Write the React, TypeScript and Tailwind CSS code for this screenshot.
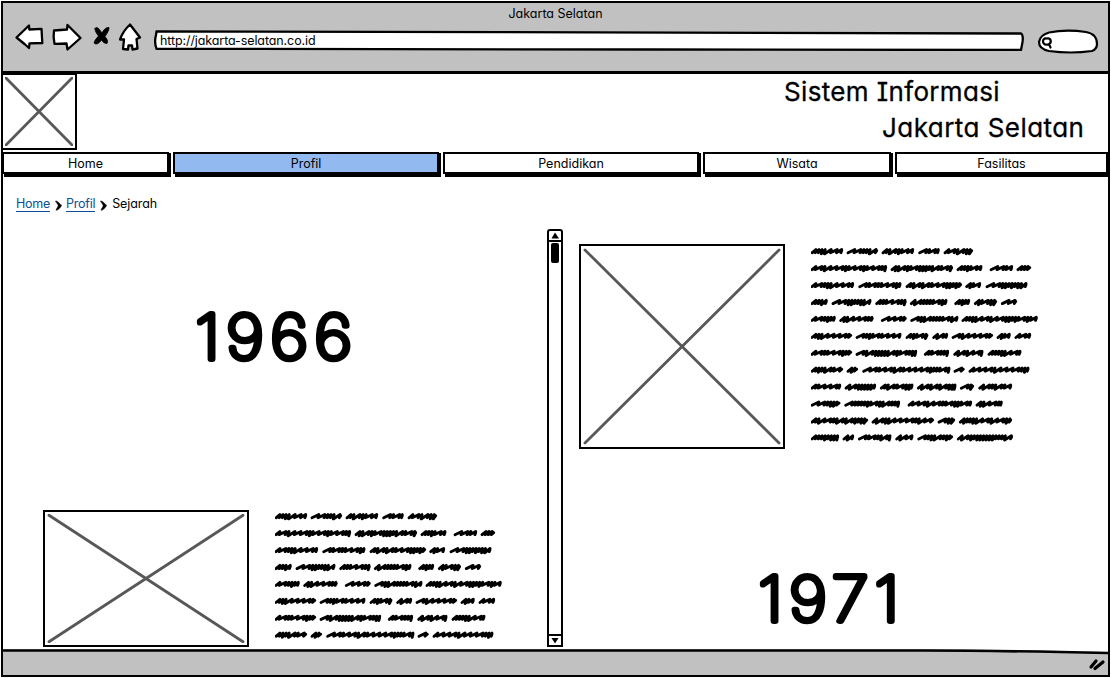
import React from "react";

const FONT = "font-[Inter,'Open_Sans',sans-serif] [font-feature-settings:'cv11','cv08']";

/* Start and end of every scribbled word, in thirds of a pixel. */
const LINES: [number, number][][] = [
  [[0, 95], [108, 200], [213, 308], [323, 385], [399, 485]],
  [[0, 227], [240, 425], [438, 513], [537, 605], [618, 659]],
  [[0, 128], [143, 270], [285, 452], [464, 509], [525, 648]],
  [[0, 49], [63, 180], [194, 286], [298, 408], [431, 476], [490, 557], [571, 617]],
  [[0, 73], [86, 187], [211, 286], [299, 441], [453, 679]],
  [[0, 122], [135, 270], [285, 351], [365, 410], [423, 545], [558, 598], [612, 659]],
  [[0, 122], [135, 317], [340, 413], [428, 516], [531, 630]],
  [[0, 95], [108, 140], [155, 417], [429, 460], [474, 654]],
  [[0, 89], [102, 194], [208, 306], [319, 435], [448, 488], [503, 602]],
  [[0, 87], [101, 266], [291, 482], [495, 574]],
  [[0, 170], [183, 368], [381, 431], [445, 602]],
  [[0, 83], [96, 128], [142, 240], [254, 306], [320, 425], [439, 605]],
];

function scribble(from: number, to: number, y: number, seed: number) {
  const end = to / 3 - 1;
  let x = from / 3 + 1;
  let s = seed;
  let d = `M${x.toFixed(1)} ${(y + 1.5).toFixed(1)}`;
  while (x < end - 3) {
    s = (s * 73 + 41) % 997;
    const kind = s % 10;
    const step = kind < 4 ? 6 : 3.1;
    const drop = kind > 6 ? 2.6 : 1.4;
    const top = Math.min(x + step + 0.8, end);
    d += `L${top.toFixed(1)} ${(y - 1.7).toFixed(1)}L${(top - 0.8).toFixed(1)} ${(y + drop).toFixed(1)}`;
    x += step;
  }
  return d + `L${end.toFixed(1)} ${(y - 0.6).toFixed(1)}`;
}

function Scribbles({ rows }: { rows: number }) {
  return (
    <svg width="232" height={rows * 17} className="shrink-0" fill="none" stroke="#000" strokeWidth="2.9" strokeLinecap="round" strokeLinejoin="round">
      {LINES.slice(0, rows).map((line, i) =>
        line.map(([a, b], j) => <path key={`${i}-${j}`} d={scribble(a, b, 5.3 + i * 16.93, i * 31 + j * 17 + 5)} />),
      )}
    </svg>
  );
}

function Placeholder({ className }: { className: string }) {
  return (
    <div className={`shrink-0 border-2 border-black bg-white p-[2px] ${className}`}>
      <svg className="block h-full w-full" viewBox="0 0 100 100" preserveAspectRatio="none" stroke="#58585a" strokeLinecap="round">
        <path d="M1 1L99 99M99 1L1 99" strokeWidth="2.8" vectorEffect="non-scaling-stroke" />
      </svg>
    </div>
  );
}

function Year({ value, width }: { value: string; width: number }) {
  return (
    <svg width={width} height="60" className={`block overflow-visible ${FONT}`}>
      <text x="2" y="50" fontSize="61" fontWeight="100" transform="scale(1.1 1)" textLength={(width - 3) / 1.1} lengthAdjust="spacing" stroke="#000" strokeWidth="5.800" strokeLinejoin="round">
        {value}
      </text>
    </svg>
  );
}

function NavButton({ label, className }: { label: string; className: string }) {
  return (
    <a className={`flex h-[22px] shrink-0 items-center justify-center border-2 border-black pt-[2px] text-[12.5px] shadow-[2px_1px_0_#000,2px_3px_0_#000] ${className}`}>
      {label}
    </a>
  );
}

function Chevron() {
  return (
    <svg width="7" height="11" className="mt-[2px]" stroke="#000" strokeWidth="0.6">
      <path d="M0.5 1C2 0.5 6 4.500 6.500 5.500C6 7 3 10.500 1 10.200C1.500 8.500 3 7 3.200 5.500C2.800 4 1.500 3 0.500 1Z" />
    </svg>
  );
}

export default function App() {
  return (
    <div className={`h-[678px] w-[1111px] overflow-hidden bg-white pl-[1px] pt-[1px] text-black ${FONT}`}>
      <div className="flex h-[676px] w-[1109px] flex-col border-2 border-black">
        <header className="flex h-[71px] shrink-0 flex-col border-b-[3px] border-black bg-[#c1c1c1]">
          <div className="h-[20px] pt-px text-center text-[12.5px] leading-[20px]">Jakarta Selatan</div>
          <div className="flex items-start">
            <svg width="151" height="32" className="shrink-0" fill="#fff" stroke="#000" strokeWidth="2.3" strokeLinejoin="round" strokeLinecap="round">
              <path d="M13.5 14.500L26 2.500L26.300 6.500L38.500 5.800L39.300 20L26.500 20.300L26 25L21.500 21Z" />
              <path d="M51 7.500L64 6.500L64.500 2L77.500 15L64.500 26.500L63.500 20.500L51.500 20.800Q50 14 51 7.500Z" />
              <path d="M92 5.500Q94 2.500 97.500 8L99 10Q102 4 106 4.500Q106.500 7 102 13.500Q106 18 104 20.500Q101 21 98.500 17Q94 23 91 20Q91.500 17 95.500 13Q91.500 8 92 5.500Z" fill="#000" strokeWidth="0.800" />
              <path d="M127 1.500L137 14.500L133.500 16L134.500 25.500L129.500 26.500L129 22.500L125.500 22.500L125 26.500L120 26L121 16.500L117 16.500Q120 8 127 1.500Z" />
            </svg>
            <div className="relative mt-[7px] flex h-[21px] w-[870px] shrink-0 items-center">
              <svg className="absolute inset-0" width="870" height="21" fill="#fff" stroke="#000" strokeWidth="2.300" strokeLinejoin="round">
                <path d="M2.500 1.500L350 2.200L867 3.500Q869.500 5 868.500 12L867 20L500 19.500L2.500 18.800Q0 12 2 5Z" />
              </svg>
              <span className="relative pl-[6px] pt-[2px] text-[12.500px] tracking-[-0.1px]">http://jakarta-selatan.co.id</span>
            </div>
            <svg width="64" height="28" className="ml-[12px] mt-[4px] shrink-0" fill="#fff" stroke="#000" strokeWidth="2.200" strokeLinecap="round">
              <path d="M13 5.500Q30 2 50 5Q61 7 61 17Q61 22 56 24Q35 27 13 24Q3 22 3 15Q4 8 13 5.500Z" />
              <path d="M10.500 11.500C15.500 10.500 16 16 12.500 17.500C8 18.500 6 15.500 7.500 12.500Q9 11 10.500 11.500M13 17L14.500 20.500" strokeWidth="2.200" fill="none" />
            </svg>
          </div>
        </header>

        <section className="flex h-[78px] shrink-0 justify-between">
          <Placeholder className="-ml-[2px] -mt-[1px] h-[77px] w-[76px]" />
          <div className="w-[324px] text-[26px] leading-[36px]">
            <div className="tracking-[0.35px] [-webkit-text-stroke:0.3px_#000]">Sistem Informasi</div>
            <div className="pl-[98px] tracking-[0.450px] [-webkit-text-stroke:0.3px_#000]">Jakarta Selatan</div>
          </div>
        </section>

        <nav className="flex h-[26px] shrink-0 gap-[4px]">
          <NavButton label="Home" className="-ml-[1px] w-[167px]" />
          <NavButton label="Profil" className="w-[266px] bg-[#93b9f1]" />
          <NavButton label="Pendidikan" className="w-[256px]" />
          <NavButton label="Wisata" className="w-[188px]" />
          <NavButton label="Fasilitas" className="w-[213px]" />
        </nav>

        <main className="flex flex-1 flex-col">
          <div className="flex h-[51px] shrink-0 items-center pl-[13px] pt-[2px] text-[12.500px] tracking-[-0.25px]">
            <a className="border-b border-[#0b4f98] leading-[14px] text-[#0b4f98]">Home</a>
            <span className="pl-[5px] pr-[4px]"><Chevron /></span>
            <a className="border-b border-[#0b4f98] leading-[14px] text-[#0b4f98]">Profil</a>
            <span className="px-[5px]"><Chevron /></span>
            <span className="tracking-[-0.1px]">Sejarah</span>
          </div>
          <div className="flex h-[418px] shrink-0">
            <div className="flex w-[544px] shrink-0 flex-col">
              <div className="flex h-[281px] shrink-0 pl-[190px] pt-[80px]">
                <Year value="1966" width={160} />
              </div>
              <div className="flex pl-[40px]">
                <Placeholder className="h-[137px] w-[206px]" />
                <div className="pl-[26px] pt-[1px]"><Scribbles rows={8} /></div>
              </div>
            </div>
            <div className="flex w-[16px] shrink-0 flex-col items-center rounded-t-[3px] border-2 border-black">
              <svg width="12" height="9" className="shrink-0"><path d="M6 1.500L10 7.500H2.500Z" /></svg>
              <div className="h-[2px] w-full shrink-0 bg-black" />
              <div className="mt-px h-[20px] w-[8px] shrink-0 rounded-[2px] bg-black" />
              <div className="flex-1" />
              <div className="h-[2px] w-full shrink-0 bg-black" />
              <svg width="12" height="9" className="shrink-0"><path d="M6 7.500L9.500 2H2.500Z" /></svg>
            </div>
            <div className="flex flex-1 flex-col">
              <div className="flex pl-[16px] pt-[15px]">
                <Placeholder className="h-[205px] w-[206px]" />
                <div className="pl-[26px] pt-[2px]"><Scribbles rows={12} /></div>
              </div>
              <div className="flex pl-[193px] pt-[121px]">
                <Year value="1971" width={144} />
              </div>
            </div>
          </div>
        </main>

        <footer className="relative flex h-[26px] shrink-0 items-center justify-end bg-[#c1c1c1]">
          <svg className="absolute left-0 top-0" width="1105" height="6">
            <path d="M0 0H960L1105 3V0Z" fill="#fff" />
            <path d="M0 1.500H920Q1000 1.700 1105 4" fill="none" stroke="#000" strokeWidth="2.600" />
          </svg>
          <svg width="20" height="18" className="mt-[3px]" stroke="#000" strokeWidth="3.200" strokeLinecap="round">
            <path d="M3 12L8 6M7 13.500L15 7" />
          </svg>
        </footer>
      </div>
    </div>
  );
}
